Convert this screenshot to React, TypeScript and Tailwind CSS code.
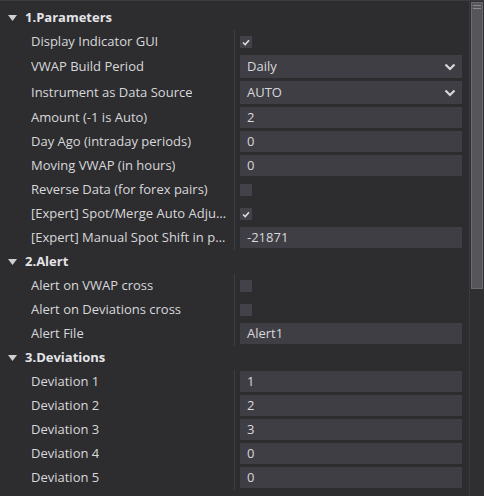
import React from 'react';

type Row =
  | { kind: 'check'; label: string; checked: boolean }
  | { kind: 'select'; label: string; value: string }
  | { kind: 'input'; label: string; value: string };

interface Section {
  title: string;
  rows: Row[];
}

const sections: Section[] = [
  {
    title: '1.Parameters',
    rows: [
      { kind: 'check', label: 'Display Indicator GUI', checked: true },
      { kind: 'select', label: 'VWAP Build Period', value: 'Daily' },
      { kind: 'select', label: 'Instrument as Data Source', value: 'AUTO' },
      { kind: 'input', label: 'Amount (-1 is Auto)', value: '2' },
      { kind: 'input', label: 'Day Ago (intraday periods)', value: '0' },
      { kind: 'input', label: 'Moving VWAP (in hours)', value: '0' },
      { kind: 'check', label: 'Reverse Data (for forex pairs)', checked: false },
      { kind: 'check', label: '[Expert] Spot/Merge Auto Adjustment', checked: true },
      { kind: 'input', label: '[Expert] Manual Spot Shift in points', value: '-21871' },
    ],
  },
  {
    title: '2.Alert',
    rows: [
      { kind: 'check', label: 'Alert on VWAP cross', checked: false },
      { kind: 'check', label: 'Alert on Deviations cross', checked: false },
      { kind: 'input', label: 'Alert File', value: 'Alert1' },
    ],
  },
  {
    title: '3.Deviations',
    rows: [
      { kind: 'input', label: 'Deviation 1', value: '1' },
      { kind: 'input', label: 'Deviation 2', value: '2' },
      { kind: 'input', label: 'Deviation 3', value: '3' },
      { kind: 'input', label: 'Deviation 4', value: '0' },
      { kind: 'input', label: 'Deviation 5', value: '0' },
    ],
  },
];

const Chevron = () => (
  <svg width="12" height="8" viewBox="0 0 12 8" className="mr-[6px]">
    <path d="M1.5 1.5 L6 6 L10.5 1.5" fill="none" stroke="#d8d8d8" strokeWidth="2.2" />
  </svg>
);

const Tick = () => (
  <svg width="8" height="7" viewBox="0 0 8 7">
    <path d="M1 3.5 L3.2 5.6 L7 1.2" fill="none" stroke="#dcdcdc" strokeWidth="1.6" />
  </svg>
);

const Field: React.FC<{ row: Row }> = ({ row }) => {
  if (row.kind === 'check') {
    return (
      <div className="flex items-center h-full">
        <div className="w-[12px] h-[12px] bg-[#434248] flex items-center justify-center">
          {row.checked && <Tick />}
        </div>
      </div>
    );
  }
  if (row.kind === 'select') {
    return (
      <div className="mt-px h-[23px] bg-[#3f3e45] flex items-center justify-between pl-[7px]">
        <span>{row.value}</span>
        <Chevron />
      </div>
    );
  }
  return (
    <div className="mt-px h-[21px] bg-[#3f3e45] flex items-center pl-[7px]">
      <span>{row.value}</span>
    </div>
  );
};

export default function App() {
  return (
    <div
      className="w-[484px] h-[496px] bg-[#2d2d30] text-[#d8d8da] text-[13px] flex overflow-hidden border-t border-[#3c3c40]"
      style={{ fontFamily: '"Open Sans", "Liberation Sans", sans-serif' }}
    >
      <div className="flex-1 pt-[5px]">
        {sections.map((s) => (
          <div key={s.title}>
            <div className="h-[24px] flex items-center pl-[8px]">
              <svg width="9" height="6" viewBox="0 0 9 6" className="mr-[8px]">
                <path d="M0 0 H9 L4.5 6 Z" fill="#d0d0d0" />
              </svg>
              <span className="font-bold text-[13px] text-[#e4e4e8]">{s.title}</span>
            </div>
            {s.rows.map((r) => (
              <div key={r.label} className={`flex ${r.kind === 'select' ? 'h-[26px]' : 'h-[24px]'}`}>
                <div className="w-[234px] min-w-0 pl-[31px] pr-[4px] flex items-center">
                  <span className="truncate">{r.label}</span>
                </div>
                <div className="w-px bg-[#3e3e42]" />
                <div className="w-[222px] ml-[5px]">
                  <Field row={r} />
                </div>
              </div>
            ))}
          </div>
        ))}
      </div>
      <div className="w-[15px] border-l border-[#3a3a3e] bg-[#2f2f32] relative">
        <div className="mt-px mx-[1px] h-[287px] bg-[#55555a] border border-[#6a6a6f] flex flex-col items-end pt-[2px] pr-[1px] gap-[2px]">
          <div className="w-[8px] h-px bg-[#8a8a8f]" />
          <div className="w-[8px] h-px bg-[#8a8a8f]" />
        </div>
      </div>
    </div>
  );
}
